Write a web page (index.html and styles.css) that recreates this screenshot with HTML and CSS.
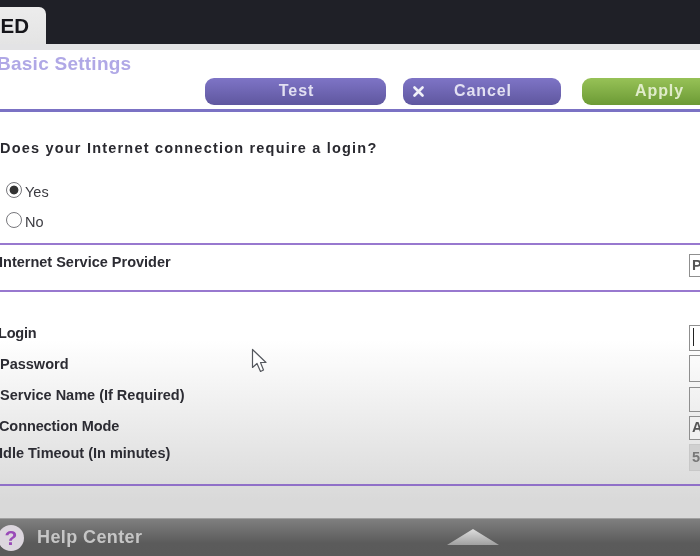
FILE: index.html
```html
<!DOCTYPE html>
<html lang="en">
<head>
<meta charset="utf-8">
<title>Basic Settings</title>
<link rel="stylesheet" href="styles.css">
</head>
<body>
<div class="page">
  <header class="topbar">
    <div class="tab">ED</div>
  </header>
  <div class="strip"></div>
  <main class="content">
    <div class="title-block">
      <h1 class="title">Basic Settings</h1>
      <div class="actions">
        <button class="btn btn-test">Test</button>
        <button class="btn btn-cancel">
          <svg class="x" width="11" height="11" viewBox="0 0 11 11"><path d="M1.5 1.5 L9.5 9.5 M9.5 1.5 L1.5 9.5" stroke="#f0f0f8" stroke-width="2.6" stroke-linecap="round" fill="none"/></svg>
          <span class="btn-label">Cancel</span>
        </button>
        <button class="btn btn-apply">Apply</button>
      </div>
    </div>
    <section class="login-q">
      <p class="question">Does your Internet connection require a login?</p>
      <div class="radio-row radio-yes"><span class="radio checked"></span><span>Yes</span></div>
      <div class="radio-row radio-no"><span class="radio"></span><span>No</span></div>
    </section>
    <section class="isp">
      <span class="label l-isp">Internet Service Provider</span>
      <span class="field field-isp">P</span>
    </section>
    <section class="form">
      <div class="labels">
        <span class="label l-login">Login</span>
        <span class="label l-pass">Password</span>
        <span class="label l-service">Service Name (If Required)</span>
        <span class="label l-mode">Connection Mode</span>
        <span class="label l-idle">Idle Timeout (In minutes)</span>
      </div>
      <div class="fields">
        <span class="field f-login"><span class="caret"></span></span>
        <span class="field f-pass"></span>
        <span class="field f-service"></span>
        <span class="field f-mode">A</span>
        <span class="field f-idle">5</span>
      </div>
    </section>
  </main>
  <footer class="help">
    <span class="help-icon">?</span>
    <span class="help-text">Help Center</span>
    <span class="arrow"></span>
  </footer>
  <svg class="pointer" width="17" height="26" viewBox="0 0 17 26">
    <path d="M1.5 1.5 V19.5 L6 15.5 L9.5 23.5 L12.5 22 L9.5 14.5 L15 14.5 Z" fill="#fff" stroke="#55585e" stroke-width="1.2" stroke-linejoin="round"/>
  </svg>
</div>
</body>
</html>
```
FILE: styles.css
```css
* { box-sizing: border-box; }
html, body { margin: 0; padding: 0; }
body { font-family: "Liberation Sans", Arial, sans-serif; background: #fff; }

.page {
  position: relative;
  width: 700px;
  height: 556px;
  overflow: hidden;
  display: flex;
  flex-direction: column;
  filter: blur(0.4px);
}

.topbar {
  height: 44px;
  flex: none;
  background: #1f2027;
  display: flex;
  align-items: flex-end;
}
.tab {
  width: 46px;
  height: 37px;
  background: linear-gradient(#ececec, #e4e4e4);
  border-top-right-radius: 7px;
  font-size: 20.5px;
  font-weight: 700;
  color: #15151a;
  line-height: 38px;
  text-align: right;
  padding-right: 17px;
}
.strip { height: 6px; flex: none; background: #e3e3e5; }

.content {
  flex: 1;
  display: flex;
  flex-direction: column;
  background: linear-gradient(#fff 0, #fff 290px, #d9d9d9 450px);
}

.title-block {
  height: 62px;
  flex: none;
  border-bottom: 3px solid #7b72c4;
  position: relative;
  padding-top: 2px;
}
.title {
  margin: 0 0 0 -3px;
  font-size: 19px;
  line-height: 24px;
  font-weight: 700;
  letter-spacing: 0.25px;
  color: #b0a8e6;
}
.actions {
  display: flex;
  margin: 2px 0 0 205px;
}
.btn {
  height: 27px;
  border: 0;
  padding: 0 0 2px;
  font-family: inherit;
  font-size: 16px;
  font-weight: 700;
  letter-spacing: 0.9px;
  color: #e2e0f2;
  border-radius: 9px;
  background: linear-gradient(#7e74c6, #5f579f);
  flex: none;
}
.btn-test { width: 181px; margin-right: 17px; padding-left: 2px; }
.btn-cancel {
  width: 158px;
  margin-right: 21px;
  display: flex;
  align-items: center;
  padding-left: 10px;
}
.x { flex: none; margin-right: 30px; margin-top: 2px; }
.btn-label { line-height: 25px; }
.btn-apply {
  width: 155px;
  color: #e0ecca;
  background: linear-gradient(#97c257, #6c9a35);
}

.login-q {
  height: 133px;
  flex: none;
  border-bottom: 2px solid #9878cf;
  position: relative;
}
.question {
  margin: 0;
  padding-top: 28px;
  font-size: 14.5px;
  line-height: 16px;
  font-weight: 700;
  letter-spacing: 1.2px;
  color: #2a2a30;
}
.radio-row {
  display: flex;
  align-items: center;
  font-size: 14.5px;
  color: #3a3a40;
  padding-left: 6px;
  height: 18px;
}
.radio-yes { margin-top: 27px; }
.radio-no { margin-top: 12px; }
.radio {
  width: 16px;
  height: 16px;
  margin-right: 3px;
  margin-top: -4px;
  border-radius: 50%;
  border: 1.5px solid #77777c;
  background: #fff;
  flex: none;
}
.radio.checked {
  background: radial-gradient(circle, #333 0, #333 4px, #fff 4.8px);
}

.label {
  display: block;
  font-size: 14.5px;
  line-height: 16px;
  font-weight: 700;
  color: #2c2c33;
  white-space: nowrap;
}
.l-isp { margin-left: -1px; }

.isp {
  height: 47px;
  flex: none;
  border-bottom: 2px solid #9878cf;
  display: flex;
  justify-content: space-between;
  padding-top: 9px;
}
.field {
  display: block;
  width: 30px;
  flex: none;
  border: 1.5px solid #8f8f8f;
  background: #fff;
  font-size: 14.5px;
  font-weight: 700;
  color: #555;
  padding-left: 2px;
  position: relative;
}
.field-isp { height: 23px; line-height: 20px; margin-right: -19px; }

.form {
  height: 194px;
  flex: none;
  border-bottom: 2px solid #9070c8;
  display: flex;
  justify-content: space-between;
  padding-top: 33px;
}
.labels { display: flex; flex-direction: column; }
.l-login { margin-bottom: 15px; margin-left: -2px; letter-spacing: -0.2px; }
.l-pass { margin-bottom: 15px; }
.l-service { margin-bottom: 15px; }
.l-mode { margin-bottom: 11px; margin-left: -1px; letter-spacing: -0.1px; }
.l-idle { margin-left: -1px; }
.fields {
  display: flex;
  flex-direction: column;
  margin-right: -19px;
}
.f-login { height: 26px; margin-bottom: 4px; background: transparent; }
.f-pass { height: 27px; margin-bottom: 5px; background: transparent; }
.f-service { height: 25px; margin-bottom: 4px; background: transparent; }
.f-mode { height: 24px; margin-bottom: 4px; line-height: 21px; background: #f0f0f0; }
.f-idle {
  height: 27px;
  line-height: 24px;
  border-color: #c8c8c8;
  background: #d0d0d0;
  color: #777;
}
.caret {
  display: block;
  width: 1px;
  height: 18px;
  margin: 2px 0 0 1px;
  background: #222;
}

.help {
  margin-top: auto;
  height: 38px;
  flex: none;
  border-top: 1px solid #a0a0a0;
  background: linear-gradient(#7f7f7f, #5b5b5b 65%, #5a5a5a);
  display: flex;
  align-items: center;
  position: relative;
}
.help-icon {
  width: 26px;
  height: 26px;
  margin-left: -2px;
  border-radius: 50%;
  background: #dcd6de;
  color: #9a4ab8;
  font-size: 21px;
  font-weight: 700;
  line-height: 26px;
  text-align: center;
  flex: none;
}
.help-text {
  margin-left: 13px;
  font-size: 18px;
  font-weight: 700;
  letter-spacing: 0.4px;
  color: #c6c6c6;
}
.arrow {
  position: absolute;
  left: 447px;
  top: 10px;
  width: 52px;
  height: 16px;
  background: linear-gradient(#dedede, #a0a0a0);
  clip-path: polygon(50% 0, 100% 100%, 0 100%);
}

.pointer {
  position: absolute;
  left: 251px;
  top: 348px;
}
```
